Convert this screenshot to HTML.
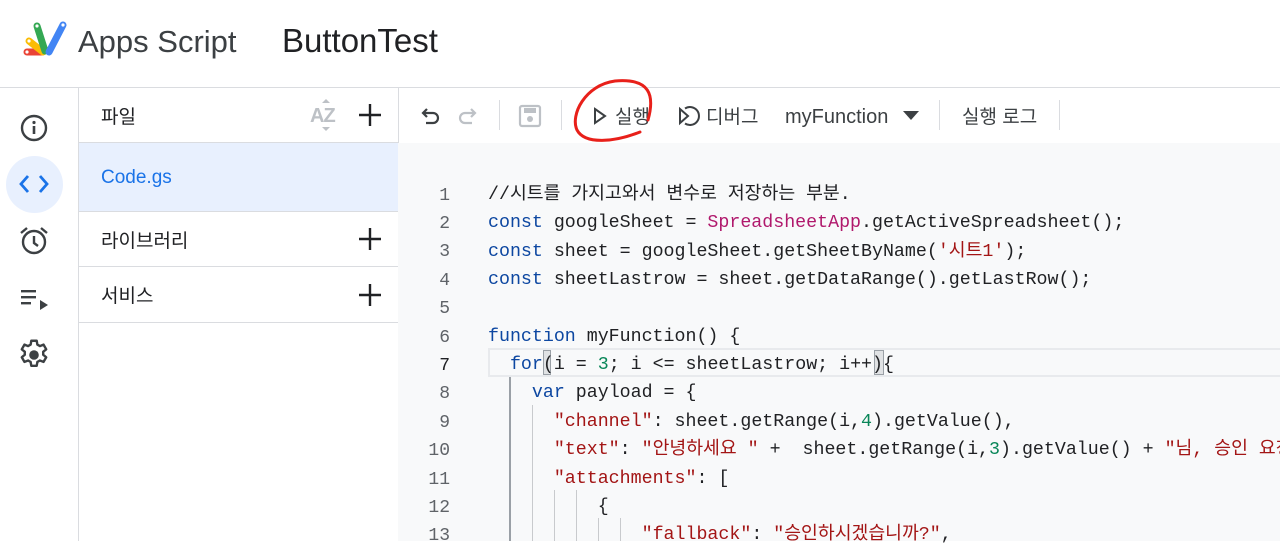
<!DOCTYPE html>
<html><head><meta charset="utf-8">
<style>
*{margin:0;padding:0;box-sizing:border-box}
body{width:1280px;height:541px;overflow:hidden;background:#fff;font-family:"Liberation Sans","Noto Sans CJK KR",sans-serif;color:#202124;position:relative}
.abs{position:absolute}
.code{position:absolute;left:398px;top:143px;right:0;bottom:0;background:#f8f9fa}
.ln{position:absolute;left:400px;width:50px;text-align:right;font-family:"Liberation Mono",monospace;font-size:18px;line-height:22px;color:#5f6368;margin-top:3px}
.cl{position:absolute;left:488px;white-space:pre;font-family:"Liberation Mono","Noto Sans CJK KR",monospace;font-size:18.3px;line-height:22px;height:22px;color:#202124;margin-top:3px}
.k{color:#0d47a1}.s{color:#a31515}.p{color:#b0186c}.n{color:#098658}
.tb{position:absolute;top:106px;font-size:19px;line-height:24px;color:#3c4043}
.fl{position:absolute;font-size:19px;line-height:24px}
</style></head><body>
<!-- header -->
<svg class="abs" style="left:22px;top:19px" width="48" height="42" viewBox="0 0 48 40">
<g stroke-linecap="round" fill="none">
<line x1="5" y1="32" x2="20" y2="32" stroke="#ea4335" stroke-width="7"/>
<line x1="7" y1="21" x2="21" y2="32" stroke="#fbbc04" stroke-width="7"/>
<line x1="15" y1="6" x2="23" y2="31" stroke="#34a853" stroke-width="7"/>
<line x1="41" y1="5" x2="27" y2="32" stroke="#4285f4" stroke-width="7"/>
</g>
<g fill="#fff"><circle cx="5" cy="32" r="1.6"/><circle cx="7" cy="21" r="1.6"/><circle cx="15" cy="6" r="1.6"/><circle cx="41" cy="5" r="1.6"/></g>
</svg>
<div class="abs" style="left:78px;top:24px;font-size:31px;line-height:36px;color:#3c4043">Apps Script</div>
<div class="abs" style="left:282px;top:22px;font-size:33px;line-height:38px;color:#202124">ButtonTest</div>
<div class="abs" style="left:0;top:87px;width:1280px;height:1px;background:#dadce0"></div>
<!-- left nav -->
<div class="abs" style="left:78px;top:88px;width:1px;height:453px;background:#dadce0"></div>
<svg class="abs" style="left:20px;top:114px" width="28" height="28" viewBox="0 0 28 28"><circle cx="14" cy="14" r="12" fill="none" stroke="#3c4043" stroke-width="2.4"/><rect x="12.7" y="12" width="2.6" height="8" fill="#3c4043"/><circle cx="14" cy="8.5" r="1.6" fill="#3c4043"/></svg>
<div class="abs" style="left:6px;top:156px;width:57px;height:57px;border-radius:50%;background:#e8f0fe"></div>
<svg class="abs" style="left:18px;top:172px" width="32" height="24" viewBox="0 0 32 24"><path d="M10 4 L3 12 L10 20 M22 4 L29 12 L22 20" fill="none" stroke="#1a73e8" stroke-width="2.8"/></svg>
<svg class="abs" style="left:19px;top:226px" width="30" height="30" viewBox="0 0 30 30"><circle cx="15" cy="16" r="11" fill="none" stroke="#3c4043" stroke-width="2.4"/><path d="M15 10 V17 L19 20" fill="none" stroke="#3c4043" stroke-width="2.4"/><path d="M2 7 L8 2 M28 7 L22 2" stroke="#3c4043" stroke-width="2.4"/></svg>
<svg class="abs" style="left:20px;top:288px" width="30" height="24" viewBox="0 0 30 24"><rect x="1" y="2" width="15" height="2.4" fill="#3c4043"/><rect x="1" y="8" width="15" height="2.4" fill="#3c4043"/><rect x="1" y="14" width="10" height="2.4" fill="#3c4043"/><path d="M20 12 L28 17 L20 22Z" fill="#3c4043"/></svg>
<svg class="abs" style="left:16px;top:337px" width="36" height="36" viewBox="0 0 24 24"><path fill="none" stroke="#3c4043" stroke-width="1.6" stroke-linejoin="round" d="M10.2 2.5h3.6l.45 2.6c.6.25 1.15.57 1.65.95l2.45-.95 1.8 3.1-2.05 1.7c.08.65.08 1.25 0 1.9l2.05 1.7-1.8 3.1-2.45-.95c-.5.38-1.050.7-1.65.95l-.45 2.6h-3.6l-.45-2.6c-.6-.25-1.15-.57-1.65-.95l-2.45.95-1.8-3.1 2.05-1.7c-.08-.65-.08-1.25 0-1.9L3.85 8.2l1.8-3.1 2.45.95c.5-.38 1.05-.7 1.65-.95z"/><circle cx="12" cy="12" r="3.2" fill="#3c4043"/></svg>
<!-- file panel -->
<div class="abs" style="left:398px;top:88px;width:1px;height:453px;background:#dadce0"></div>
<div class="fl" style="left:101px;top:106px">파일</div>
<div class="abs" style="left:310px;top:104px;font-size:20px;line-height:24px;font-weight:bold;color:#bdc1c6;letter-spacing:-1px">AZ</div>
<svg class="abs" style="left:320px;top:98px" width="12" height="34"><path d="M2 5L6 1L10 5M2 29L6 33L10 29" fill="#bdc1c6"/></svg>
<svg class="abs" style="left:358px;top:103px" width="24" height="24"><path d="M12 1V23M1 12H23" stroke="#202124" stroke-width="2.4"/></svg>
<div class="abs" style="left:79px;top:142px;width:319px;height:1px;background:#dadce0"></div>
<div class="abs" style="left:79px;top:143px;width:319px;height:68px;background:#e8f0fe"></div>
<div class="fl" style="left:101px;top:166px;color:#1a73e8">Code.gs</div>
<div class="abs" style="left:79px;top:211px;width:319px;height:1px;background:#dadce0"></div>
<div class="fl" style="left:101px;top:230px">라이브러리</div>
<svg class="abs" style="left:358px;top:227px" width="24" height="24"><path d="M12 1V23M1 12H23" stroke="#202124" stroke-width="2.4"/></svg>
<div class="abs" style="left:79px;top:266px;width:319px;height:1px;background:#dadce0"></div>
<div class="fl" style="left:101px;top:285px">서비스</div>
<svg class="abs" style="left:358px;top:283px" width="24" height="24"><path d="M12 1V23M1 12H23" stroke="#202124" stroke-width="2.4"/></svg>
<div class="abs" style="left:79px;top:322px;width:319px;height:1px;background:#dadce0"></div>
<!-- toolbar -->
<svg class="abs" style="left:418px;top:104px" width="24" height="24" viewBox="0 0 24 24"><path d="M5 9 H15 A5 5 0 0 1 15 19 H8 M9 5 L5 9 L9 13" fill="none" stroke="#3c4043" stroke-width="2.2"/></svg>
<svg class="abs" style="left:456px;top:104px" width="24" height="24" viewBox="0 0 24 24"><path d="M19 9 H9 A5 5 0 0 0 9 19 H16 M15 5 L19 9 L15 13" fill="none" stroke="#bdc1c6" stroke-width="2.2"/></svg>
<div class="abs" style="left:499px;top:100px;width:1px;height:30px;background:#dadce0"></div>
<svg class="abs" style="left:518px;top:104px" width="24" height="24" viewBox="0 0 24 24"><rect x="2" y="2" width="20" height="20" rx="2" fill="none" stroke="#bdc1c6" stroke-width="2.2"/><rect x="6" y="4" width="12" height="5" fill="#bdc1c6"/><circle cx="12" cy="15" r="3" fill="#bdc1c6"/></svg>
<div class="abs" style="left:561px;top:100px;width:1px;height:30px;background:#dadce0"></div>
<svg class="abs" style="left:592px;top:106px" width="16" height="20" viewBox="0 0 16 20"><path d="M3 3 L13 10 L3 17Z" fill="none" stroke="#3c4043" stroke-width="2"/></svg>
<div class="tb" style="left:615px">실행</div>
<svg class="abs" style="left:677px;top:104px" width="24" height="24" viewBox="0 0 24 24"><path d="M3 5 L11 12 L3 19Z" fill="none" stroke="#3c4043" stroke-width="2"/><path d="M8 4.5 A9 9 0 1 1 8 19.5" fill="none" stroke="#3c4043" stroke-width="2"/></svg>
<div class="tb" style="left:706px">디버그</div>
<div class="tb" style="left:785px;font-size:20px;top:105px">myFunction</div>
<svg class="abs" style="left:902px;top:110px" width="18" height="12"><path d="M1 1H17L9 10Z" fill="#3c4043"/></svg>
<div class="abs" style="left:939px;top:100px;width:1px;height:30px;background:#dadce0"></div>
<div class="tb" style="left:962px">실행 로그</div>
<div class="abs" style="left:1059px;top:100px;width:1px;height:30px;background:#dadce0"></div>
<!-- code area -->
<div class="code"></div>
<div class="abs" style="left:488px;top:348px;width:792px;height:29px;border:2px solid #e8eaed;border-right:none"></div>
<div class="abs" style="left:543px;top:350px;width:8px;height:25px;background:#e0e2e4;border:1px solid #9aa0a6"></div>
<div class="abs" style="left:874px;top:350px;width:10px;height:25px;background:#e0e2e4;border:1px solid #9aa0a6"></div>
<div class="abs" style="left:509px;top:377px;width:2px;height:164px;background:#9aa0a6"></div>
<div class="abs" style="left:532px;top:405px;width:1px;height:136px;background:#c8cacd"></div>
<div class="abs" style="left:554px;top:490px;width:1px;height:51px;background:#c8cacd"></div>
<div class="abs" style="left:576px;top:490px;width:1px;height:51px;background:#c8cacd"></div>
<div class="abs" style="left:598px;top:518px;width:1px;height:23px;background:#c8cacd"></div>
<div class="abs" style="left:620px;top:518px;width:1px;height:23px;background:#c8cacd"></div>

<div class="ln" style="top:182px">1</div><div class="cl" style="top:181px">//시트를 가지고와서 변수로 저장하는 부분.</div>
<div class="ln" style="top:210px">2</div><div class="cl" style="top:209px"><span class="k">const</span> googleSheet = <span class="p">SpreadsheetApp</span>.getActiveSpreadsheet();</div>
<div class="ln" style="top:238px">3</div><div class="cl" style="top:238px"><span class="k">const</span> sheet = googleSheet.getSheetByName(<span class="s">'시트1'</span>);</div>
<div class="ln" style="top:267px">4</div><div class="cl" style="top:266px"><span class="k">const</span> sheetLastrow = sheet.getDataRange().getLastRow();</div>
<div class="ln" style="top:295px">5</div>
<div class="ln" style="top:324px">6</div><div class="cl" style="top:323px"><span class="k">function</span> myFunction() {</div>
<div class="ln" style="top:352px;color:#202124">7</div><div class="cl" style="top:351px">  <span class="k">for</span>(i = <span class="n">3</span>; i &lt;= sheetLastrow; i++){</div>
<div class="ln" style="top:380px">8</div><div class="cl" style="top:379px">    <span class="k">var</span> payload = {</div>
<div class="ln" style="top:409px">9</div><div class="cl" style="top:408px">      <span class="s">"channel"</span>: sheet.getRange(i,<span class="n">4</span>).getValue(),</div>
<div class="ln" style="top:437px">10</div><div class="cl" style="top:436px">      <span class="s">"text"</span>: <span class="s">"안녕하세요 "</span> +  sheet.getRange(i,<span class="n">3</span>).getValue() + <span class="s">"님, 승인 요청"</span></div>
<div class="ln" style="top:466px">11</div><div class="cl" style="top:465px">      <span class="s">"attachments"</span>: [</div>
<div class="ln" style="top:494px">12</div><div class="cl" style="top:493px">          {</div>
<div class="ln" style="top:522px">13</div><div class="cl" style="top:521px">              <span class="s">"fallback"</span>: <span class="s">"승인하시겠습니까?"</span>,</div>
<!-- red circle -->
<svg class="abs" style="left:0;top:0" width="1280" height="541"><path d="M648 120 C655 95 650 78 615 81 C585 85 570 115 577 130 C585 145 615 142 640 132" fill="none" stroke="#e8201a" stroke-width="3" stroke-linecap="round"/></svg>
</body></html>
